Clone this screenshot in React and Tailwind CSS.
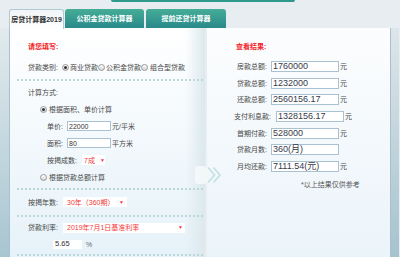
import React from 'react';

const Radio = ({ checked }) => (
  <span className="inline-flex w-[7px] h-[7px] rounded-full border border-[#9a9a9a] bg-[linear-gradient(#ffffff,#d4d4d4)] items-center justify-center mr-[1px] shrink-0">
    {checked && <span className="w-[3px] h-[3px] rounded-full bg-[#333]" />}
  </span>
);

const Dotted = ({ className = '' }) => (
  <div className={`h-0 border-t-2 border-dotted border-[#bcd8da] -ml-[11px] w-[186px] ${className}`} />
);

const results = [
  { label: '房款总额:', value: '1760000', unit: '元' },
  { label: '贷款总额:', value: '1232000', unit: '元' },
  { label: '还款总额:', value: '2560156.17', unit: '元' },
  { label: '支付利息款:', value: '1328156.17', unit: '元', wide: true },
  { label: '首期付款:', value: '528000', unit: '元' },
  { label: '贷款月数:', value: '360(月)', unit: '' },
  { label: '月均还款:', value: '7111.54(元)', unit: '元' },
];

const App = () => {
  return (
    <div className="w-[400px] h-[257px] overflow-hidden bg-[#e7edf0] flex flex-col relative font-['Liberation_Sans','Noto_Sans_CJK_SC',sans-serif] text-[7px] text-[#474747] leading-none">
      {/* top strip */}
      <div className="h-[9px] flex">
        <div className="ml-[111px] w-[184px] h-[2px] rounded-b-[3px] bg-[#2f9a8b]" />
      </div>

      {/* tabs */}
      <div className="h-[19px] flex items-stretch pl-[9px]">
        <div className="w-[55px] border border-b-0 border-[#b2cad4] rounded-t-[3px] bg-[linear-gradient(#f1f5f7,#ffffff)] flex items-center justify-center font-bold text-[#333] relative z-10 -mb-px">
          房贷计算器2019
        </div>
        <div className="ml-px w-[79px] rounded-t-[3px] bg-[linear-gradient(#45ad97,#2a898a)] text-white font-bold flex items-center justify-center">
          公积金贷款计算器
        </div>
        <div className="ml-[2px] w-[80px] rounded-t-[3px] bg-[linear-gradient(#45ad97,#2a898a)] text-white font-bold flex items-center justify-center">
          提前还贷计算器
        </div>
      </div>

      {/* body */}
      <div className="flex-1 flex min-h-0">
        <div className="w-[9px] bg-[linear-gradient(#e2eaed,#a8c5d1)]" />

        {/* left panel */}
        <div className="w-[196px] border-l border-[#a3c3cf] bg-[linear-gradient(to_right,rgba(255,255,255,0)_90%,#dce8ec),linear-gradient(#ffffff,#e6f2f9)] pl-[18px] pt-[12px] flex flex-col">
          <div className="h-[12px] flex items-center text-[#f4262a] font-bold">请您填写:</div>

          <div className="mt-[9px] h-[12px] flex items-center">
            <span className="w-[34px]">贷款类别:</span>
            <Radio checked />
            <span>商业贷款</span>
            <Radio />
            <span>公积金贷款</span>
            <Radio />
            <span className="ml-px">组合型贷款</span>
          </div>

          <Dotted className="mt-[6px]" />

          <div className="mt-[5px] h-[12px] flex items-center">计算方式:</div>

          <div className="mt-[5px] h-[12px] flex items-center ml-[12px]">
            <Radio checked />
            <span className="ml-px">根据面积、单价计算</span>
          </div>

          <div className="mt-[5px] h-[12px] flex items-center ml-[19px]">
            <span className="w-[20px]">单价:</span>
            <span className="w-[44px] h-[10px] border border-[#a9c2d2] bg-white flex items-center px-[1px] text-[#333]">22000</span>
            <span className="ml-px">元/平米</span>
          </div>

          <div className="mt-[5px] h-[12px] flex items-center ml-[19px]">
            <span className="w-[20px]">面积:</span>
            <span className="w-[44px] h-[10px] border border-[#a9c2d2] bg-white flex items-center px-[1px] text-[#333]">80</span>
            <span className="ml-px">平方米</span>
          </div>

          <div className="mt-[5px] h-[12px] flex items-center ml-[19px]">
            <span className="w-[35px]">按揭成数:</span>
            <span className="w-[23px] h-[10px] bg-white flex items-center pl-[2px] text-[#f23a3a]">
              7成<span className="ml-[5px] text-[5px]">▼</span>
            </span>
          </div>

          <div className="mt-[5px] h-[12px] flex items-center ml-[12px]">
            <Radio />
            <span className="ml-px">根据贷款总额计算</span>
          </div>

          <Dotted className="mt-[5px]" />

          <div className="mt-[6px] h-[12px] flex items-center">
            <span className="w-[35px]">按揭年数:</span>
            <span className="w-[64px] h-[10px] bg-white flex items-center pl-[4px] text-[#f23a3a]">
              30年（360期）<span className="ml-auto mr-[3px] text-[5px]">▼</span>
            </span>
          </div>

          <Dotted className="mt-[7px]" />

          <div className="mt-[5px] h-[11px] flex items-center">
            <span className="w-[35px]">贷款利率:</span>
            <span className="w-[122px] h-[10px] bg-white flex items-center pl-[4px] text-[#f23a3a]">
              2019年7月1日基准利率<span className="ml-auto mr-[2px] text-[5px]">▼</span>
            </span>
          </div>

          <div className="mt-[5px] h-[12px] flex items-center ml-[25px]">
            <span className="w-[29px] h-[9px] bg-white flex items-center pl-[2px] text-[#333] text-[7.5px]">5.65</span>
            <span className="ml-[4px] text-[#666]">%</span>
          </div>

          <Dotted className="mt-[4px]" />
        </div>

        <div className="w-[2px]" />

        {/* right panel */}
        <div className="w-[184px] border-r border-[#a9bfcb] bg-[linear-gradient(#fcfdfe,#ebf4fa)] pl-[30px] pt-[12px] flex flex-col">
          <div className="h-[12px] flex items-center text-[#f4262a] font-bold -ml-px">查看结果:</div>

          <div className="mt-[9px] flex flex-col gap-[5.7px]">
            {results.map((r) => (
              <div key={r.label} className={`h-[11px] flex items-center ${r.wide ? '-ml-[3px]' : ''}`}>
                <span className={r.wide ? 'w-[42px]' : 'w-[34px]'}>{r.label}</span>
                <span className="w-[68px] h-[11px] border border-[#a9c2d2] bg-white flex items-center px-[1px] text-[9px] text-[#363a4a]">
                  {r.value}
                </span>
                <span className="ml-px">{r.unit}</span>
              </div>
            ))}
          </div>

          <div className="mt-[6px] h-[12px] flex items-center ml-[64px] text-[#555]">*以上结果仅供参考</div>
        </div>

        <div className="w-[8px] bg-[linear-gradient(#dde6ea,#a6c3cf)]" />
      </div>

      {/* arrow between panels */}
      <svg className="absolute left-[195px] top-[166px]" width="27" height="18" viewBox="0 0 27 18">
        <rect x="0" y="0" width="12" height="18" rx="3" fill="#ffffff" opacity="0.6" />
        <polyline points="13,1.5 19.5,9 13,16.5" fill="none" stroke="#c3e0df" strokeWidth="1.6" />
        <polyline points="18.5,1.5 25,9 18.5,16.5" fill="none" stroke="#c3e0df" strokeWidth="1.6" />
      </svg>
    </div>
  );
};

export default App;
